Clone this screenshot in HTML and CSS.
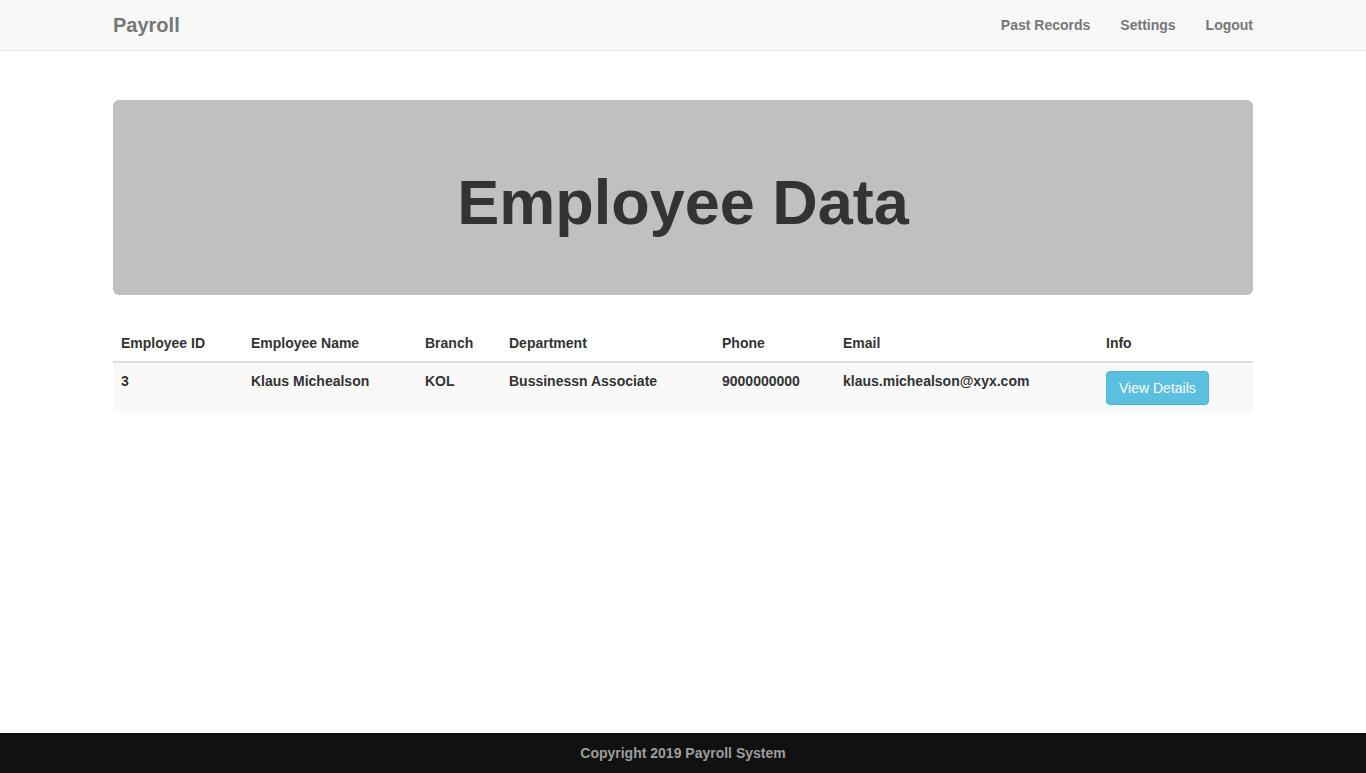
FILE: index.html
```
<!DOCTYPE html>
<html>
<head>
<meta charset="utf-8">
<title>Payroll</title>
<link rel="stylesheet" href="styles.css">
</head>
<body>
<nav class="navbar">
  <div class="container nav-inner">
    <a class="brand" href="#">Payroll</a>
    <ul class="nav-links">
      <li><a href="#">Past Records</a></li>
      <li><a href="#">Settings</a></li>
      <li><a href="#">Logout</a></li>
    </ul>
  </div>
</nav>
<main class="container main">
  <div class="jumbotron">
    <h1>Employee Data</h1>
  </div>
  <table class="table">
    <thead>
      <tr>
        <th class="c-id">Employee ID</th>
        <th class="c-name">Employee Name</th>
        <th class="c-branch">Branch</th>
        <th class="c-dept">Department</th>
        <th class="c-phone">Phone</th>
        <th class="c-email">Email</th>
        <th class="c-info">Info</th>
      </tr>
    </thead>
    <tbody>
      <tr>
        <td>3</td>
        <td>Klaus Michealson</td>
        <td>KOL</td>
        <td>Bussinessn Associate</td>
        <td>9000000000</td>
        <td>klaus.michealson@xyx.com</td>
        <td><button class="btn-info" type="button">View Details</button></td>
      </tr>
    </tbody>
  </table>
</main>
<footer class="footer">Copyright 2019 Payroll System</footer>
</body>
</html>
```
FILE: styles.css
```
* { box-sizing: border-box; }
html, body { height: 100%; }
body {
  margin: 0;
  font-family: "Liberation Sans", Arial, sans-serif;
  font-size: 14px;
  line-height: 20px;
  font-weight: bold;
  color: #333;
  background: #fff;
  display: flex;
  flex-direction: column;
}
.container {
  width: 1170px;
  margin: 0 auto;
  padding: 0 15px;
}
.navbar {
  height: 51px;
  background: #f8f8f8;
  border-bottom: 1px solid #e7e7e7;
  flex: none;
}
.nav-inner {
  display: flex;
  justify-content: space-between;
  align-items: center;
  height: 50px;
}
.brand {
  font-size: 20px;
  line-height: 20px;
  color: #777;
  text-decoration: none;
  padding: 15px 0;
}
.nav-links {
  list-style: none;
  margin: 0 -15px 0 0;
  padding: 0;
  display: flex;
}
.nav-links a {
  display: block;
  padding: 15px;
  color: #777;
  text-decoration: none;
}
.main {
  flex: 1 0 auto;
  padding-top: 49px;
}
.jumbotron {
  background: #c0c0c0;
  border-radius: 6px;
  padding: 48px 60px;
  margin-bottom: 30px;
  text-align: center;
}
.jumbotron h1 {
  margin: 20px 0 10px;
  font-size: 63px;
  line-height: 1.1;
  font-weight: bold;
  color: #333;
}
.table {
  width: 100%;
  border-collapse: collapse;
  border-spacing: 0;
  table-layout: fixed;
}
.table th, .table td {
  padding: 8px;
  text-align: left;
  vertical-align: top;
  line-height: 20px;
  white-space: nowrap;
}
.table th {
  border-bottom: 2px solid #ddd;
  vertical-align: bottom;
}
.table tbody tr { background: #f9f9f9; }
.c-id { width: 130px; }
.c-name { width: 174px; }
.c-branch { width: 84px; }
.c-dept { width: 213px; }
.c-phone { width: 121px; }
.c-email { width: 263px; }
.c-info { width: 155px; }
.btn-info {
  font-family: "Liberation Sans", Arial, sans-serif;
  font-size: 14px;
  font-weight: normal;
  line-height: 20px;
  padding: 6px 12px;
  color: #fff;
  background: #5bc0de;
  border: 1px solid #46b8da;
  border-radius: 4px;
  cursor: pointer;
}
.footer {
  flex: none;
  height: 40px;
  background: #111;
  color: #9d9d9d;
  text-align: center;
  line-height: 40px;
}
```
